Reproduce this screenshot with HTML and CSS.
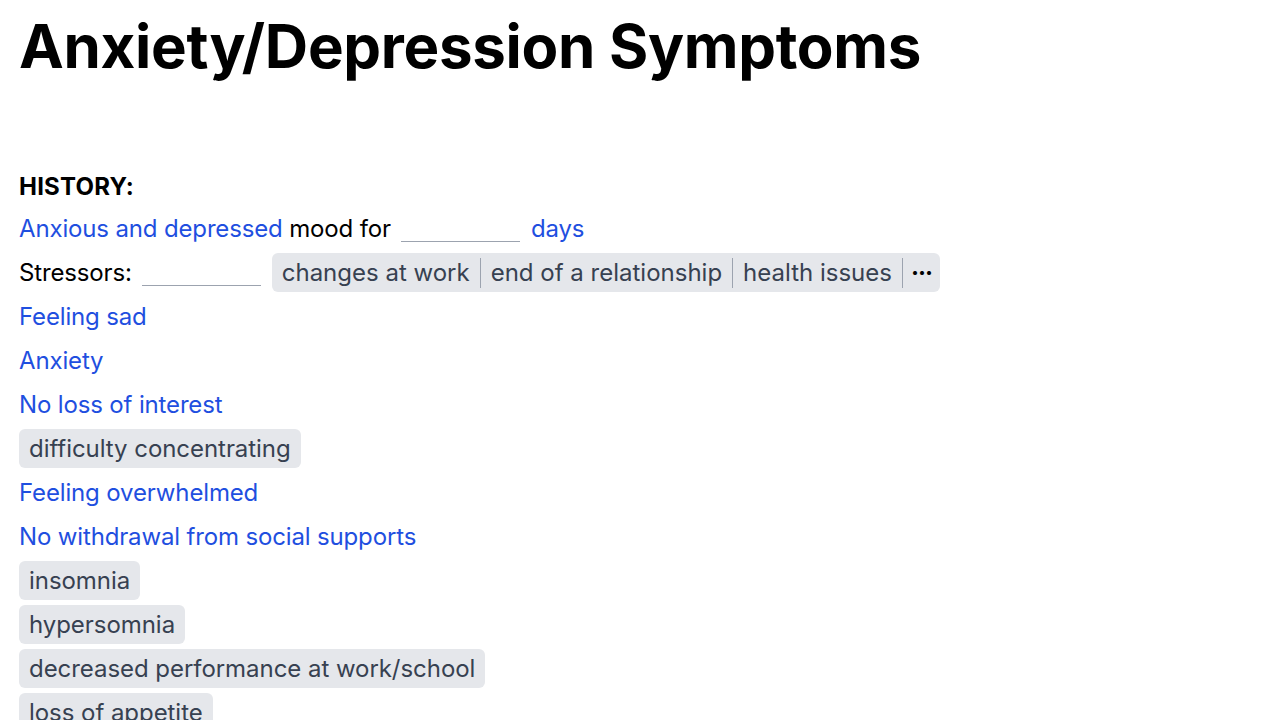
FILE: index.html
```html
<!DOCTYPE html>
<html>
<head>
<meta charset="utf-8">
<link rel="stylesheet" href="styles.css">
</head>
<body>
<main class="page">
  <h1 class="title">Anxiety/Depression Symptoms</h1>
  <section class="history">
    <h2 class="section-head">HISTORY:</h2>
    <div class="row"><span class="link">Anxious and depressed</span> mood for<span class="blank"></span><span class="link">days</span></div>
    <div class="row">Stressors:<span class="blank"></span><span class="seg"><span class="seg-item">changes at work</span><span class="seg-item">end of a relationship</span><span class="seg-item">health issues</span><span class="seg-item more">&middot;&middot;&middot;</span></span></div>
    <div class="row"><span class="link">Feeling sad</span></div>
    <div class="row"><span class="link">Anxiety</span></div>
    <div class="row"><span class="link">No loss of interest</span></div>
    <div class="row"><span class="chip">difficulty concentrating</span></div>
    <div class="row"><span class="link">Feeling overwhelmed</span></div>
    <div class="row"><span class="link">No withdrawal from social supports</span></div>
    <div class="row"><span class="chip">insomnia</span></div>
    <div class="row"><span class="chip">hypersomnia</span></div>
    <div class="row"><span class="chip">decreased performance at work/school</span></div>
    <div class="row"><span class="chip">loss of appetite</span></div>
  </section>
</main>
</body>
</html>
```

FILE: styles.css
```css
html, body {
  margin: 0;
  padding: 0;
  background: #ffffff;
}
body {
  font-family: Inter, "Noto Sans", sans-serif;
  color: #000;
}
.page {
  padding: 10px 19px;
}
.title {
  margin: 0;
  font-size: 60px;
  line-height: 72px;
  font-weight: 700;
  letter-spacing: -0.3px;
}
.history {
  margin-top: 89px;
}
.section-head {
  margin: 0 0 6px 0;
  font-size: 24px;
  line-height: 32px;
  font-weight: 700;
  letter-spacing: 0.2px;
}
.row {
  display: block;
  height: 39px;
  line-height: 39px;
  margin-bottom: 5px;
  font-size: 24px;
  letter-spacing: -0.15px;
  white-space: nowrap;
}
.link {
  color: #1f4fe0;
}
.blank {
  display: inline-block;
  width: 119px;
  height: 0;
  margin: 0 11px 0 10px;
  border-bottom: 1px solid #9ca3af;
  vertical-align: -5px;
}
.seg {
  display: inline-flex;
  align-items: center;
  vertical-align: top;
  background: #e5e7eb;
  border-radius: 6px;
  height: 39px;
  color: #374151;
  letter-spacing: 0;
}
.seg-item {
  padding: 0 10px 0 10px;
  border-right: 1px solid #9ca3af;
  line-height: 30px;
}
.seg-item.more {
  border-right: none;
  color: #000;
  font-weight: 700;
  padding: 0 8px;
  letter-spacing: -1px;
}
.chip {
  display: inline-block;
  vertical-align: top;
  background: #e5e7eb;
  color: #374151;
  border-radius: 6px;
  padding: 0 10px;
  line-height: 39px;
  letter-spacing: -0.05px;
}
```
